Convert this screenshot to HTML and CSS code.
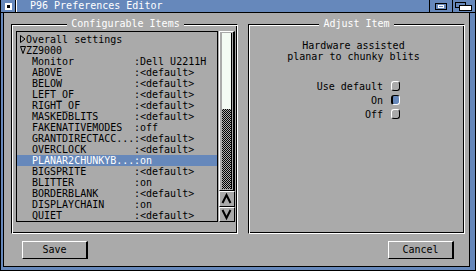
FILE: index.html
```html
<!DOCTYPE html>
<html lang="en">
<head>
    <meta charset="UTF-8">
    <meta name="viewport" content="width=device-width, initial-scale=1.0">
    <title>P96 Preferences Editor</title>
    <link rel="stylesheet" href="styles.css">
</head>
<body>
    <div class="window">
        <div class="titlebar">
            <div class="close-gadget"><span class="close-box"></span></div>
            <div class="drag-bar">P96 Preferences Editor</div>
            <div class="gadget zoom-gadget">
                <svg width="12" height="7" viewBox="0 0 12 7">
                    <rect x="0.5" y="0.5" width="11" height="6" fill="none" stroke="#000"/>
                    <rect x="3.5" y="2.5" width="5" height="2" fill="none" stroke="#fff"/>
                </svg>
            </div>
            <div class="gadget depth-gadget">
                <svg width="18" height="9" viewBox="0 0 18 9">
                    <rect x="0.5" y="0.5" width="10" height="5" fill="none" stroke="#000"/>
                    <rect x="4.5" y="3.5" width="12" height="5" fill="#fff" stroke="#000"/>
                </svg>
            </div>
        </div>

        <div class="frame">
            <div class="panel">
                <div class="groups">
                    <div class="group group-left">
                        <div class="group-title">Configurable Items</div>
                        <div class="list-area">
                            <div class="list">
                                <div class="row node">
                                    <svg class="tree-icon" width="6" height="11" viewBox="0 0 6 11">
                                        <polygon points="0.5,1.5 5,5 0.5,8.5" fill="none" stroke="#000"/>
                                    </svg>Overall settings
                                </div>
                                <div class="row node">
                                    <svg class="tree-icon" width="6" height="11" viewBox="0 0 6 11">
                                        <polygon points="0.5,1.5 5.5,1.5 3,8.5" fill="none" stroke="#000"/>
                                    </svg>ZZ9000
                                </div>
                                <div class="row"><span class="name">Monitor</span><span>:Dell U2211H</span></div>
                                <div class="row"><span class="name">ABOVE</span><span>:&lt;default&gt;</span></div>
                                <div class="row"><span class="name">BELOW</span><span>:&lt;default&gt;</span></div>
                                <div class="row"><span class="name">LEFT_OF</span><span>:&lt;default&gt;</span></div>
                                <div class="row"><span class="name">RIGHT_OF</span><span>:&lt;default&gt;</span></div>
                                <div class="row"><span class="name">MASKEDBLITS</span><span>:&lt;default&gt;</span></div>
                                <div class="row"><span class="name">FAKENATIVEMODES</span><span>:off</span></div>
                                <div class="row"><span class="name">GRANTDIRECTACC...</span><span>:&lt;default&gt;</span></div>
                                <div class="row"><span class="name">OVERCLOCK</span><span>:&lt;default&gt;</span></div>
                                <div class="row selected"><span class="name">PLANAR2CHUNKYB...</span><span>:on</span></div>
                                <div class="row"><span class="name">BIGSPRITE</span><span>:&lt;default&gt;</span></div>
                                <div class="row"><span class="name">BLITTER</span><span>:on</span></div>
                                <div class="row"><span class="name">BORDERBLANK</span><span>:&lt;default&gt;</span></div>
                                <div class="row"><span class="name">DISPLAYCHAIN</span><span>:on</span></div>
                                <div class="row"><span class="name">QUIET</span><span>:&lt;default&gt;</span></div>
                            </div>
                            <div class="scroller">
                                <div class="prop">
                                    <div class="track"><div class="knob"></div></div>
                                </div>
                                <div class="arrow">
                                    <svg width="14" height="14" viewBox="0 0 14 14">
                                        <polyline points="2.5,11 6.5,3 10.5,11" fill="none" stroke="#000" stroke-width="2"/>
                                    </svg>
                                </div>
                                <div class="arrow">
                                    <svg width="14" height="13" viewBox="0 0 14 13">
                                        <polyline points="2.5,2 6.5,10 10.5,2" fill="none" stroke="#000" stroke-width="2"/>
                                    </svg>
                                </div>
                            </div>
                        </div>
                    </div>

                    <div class="group group-right">
                        <div class="group-title">Adjust Item</div>
                        <div class="item-desc">Hardware assisted<br>planar to chunky blits</div>
                        <div class="options">
                            <div class="option"><span>Use default</span><span class="radio"></span></div>
                            <div class="option"><span>On</span><span class="radio on"></span></div>
                            <div class="option"><span>Off</span><span class="radio"></span></div>
                        </div>
                    </div>
                </div>

                <div class="buttons">
                    <button>Save</button>
                    <button>Cancel</button>
                </div>
            </div>
        </div>
    </div>
</body>
</html>
```

FILE: styles.css
```css
html, body {
    margin: 0;
    padding: 0;
    overflow: hidden;
}
body {
    font-family: "DejaVu Sans Mono", "Liberation Mono", monospace;
    font-size: 10px;
    color: #000;
    background-color: #aaa;
}
.window {
    width: 476px;
    height: 271px;
    box-sizing: border-box;
    border: 1px solid #000;
    border-top: 0;
    display: flex;
    flex-direction: column;
    background-color: #aaa;
}

/* title bar */
.titlebar {
    height: 12px;
    display: flex;
    background-color: #6688bb;
    border-bottom: 1px solid #000;
}
.close-gadget {
    width: 14px;
    border-right: 1px solid #000;
    display: flex;
    align-items: center;
    justify-content: center;
}
.close-box {
    width: 3px;
    height: 3px;
    border: 2px solid #fff;
    background-color: #000;
}
.drag-bar {
    flex: 1;
    border-left: 1px solid #fff;
    border-right: 1px solid #000;
    padding-left: 13px;
    color: #fff;
    line-height: 12px;
    white-space: nowrap;
}
.gadget {
    display: flex;
    align-items: center;
    justify-content: center;
}
.zoom-gadget {
    width: 22px;
    border-right: 1px solid #000;
}
.depth-gadget {
    width: 22px;
}

/* window frame */
.frame {
    flex: 1;
    display: flex;
    border-style: solid;
    border-color: #6688bb;
    border-width: 0 5px 3px 2px;
}
.panel {
    flex: 1;
    border: 1px solid #000;
    border-top: 0;
    padding: 11px 4px 0 7px;
}
.groups {
    display: flex;
    gap: 10px;
    height: 210px;
}
.group {
    box-sizing: border-box;
    border: 1px solid;
    border-color: #000 #fff #fff #000;
    box-shadow: inset 1px 1px 0 #fff, inset -1px -1px 0 #000;
}
.group-left {
    width: 227px;
    padding: 0 2px 0 4px;
}
.group-right {
    flex: 1;
}
.group-title {
    width: fit-content;
    margin: -6px auto 0;
    padding: 0 4px;
    line-height: 10px;
    color: #fff;
    background-color: #aaa;
}

/* list */
.list-area {
    display: flex;
    gap: 1px;
    height: 191px;
    margin-top: 2px;
}
.list {
    width: 202px;
    box-sizing: border-box;
    border: 1px solid #000;
    padding-top: 2px;
    overflow: hidden;
}
.row {
    display: flex;
    height: 11px;
    line-height: 11px;
    padding-left: 15px;
    white-space: pre;
}
.row.node {
    padding-left: 3px;
    white-space: nowrap;
}
.row.selected {
    background-color: #6688bb;
    color: #fff;
}
.tree-icon {
    flex-shrink: 0;
}
.name {
    width: 102px;
    flex-shrink: 0;
}

/* scroller */
.scroller {
    width: 16px;
    display: flex;
    flex-direction: column;
}
.prop {
    flex: 1;
    border-style: solid;
    border-color: #fff #000 #000 #fff;
    border-width: 1px 2px 1px 1px;
    padding: 1px 1px 1px 2px;
}
.track {
    height: 100%;
    box-sizing: border-box;
    border-right: 1px solid #000;
    background-color: #aaa;
    background-image: repeating-conic-gradient(#000 0 25%, transparent 0 50%);
    background-size: 2px 2px;
}
.knob {
    height: 76px;
    background-color: #f4fbf4;
}
.arrow {
    height: 16px;
    box-sizing: border-box;
    border: 1px solid;
    border-color: #fff #000 #000 #fff;
    display: flex;
    align-items: center;
    justify-content: center;
}
.arrow:last-child {
    height: 15px;
}

/* adjust item */
.item-desc {
    margin-top: 11px;
    padding-right: 6px;
    text-align: center;
    line-height: 11px;
}
.options {
    width: 151px;
    margin-top: 17px;
}
.option {
    height: 14px;
    display: flex;
    align-items: center;
    justify-content: flex-end;
    gap: 8px;
}
.radio {
    width: 9px;
    height: 10px;
    box-sizing: border-box;
    border: 1px solid;
    border-color: #fff #000 #000 #fff;
    border-radius: 3px;
}
.radio.on {
    border-color: #000 #fff #fff #000;
    border-left-width: 2px;
    background-color: #6688bb;
}

/* buttons */
.buttons {
    display: flex;
    justify-content: space-between;
    margin-top: 7px;
    padding: 0 11px;
}
button {
    width: 66px;
    height: 18px;
    padding: 0;
    font: inherit;
    line-height: 16px;
    color: #000;
    background-color: #aaa;
    border: 1px solid;
    border-color: #fff #000 #000 #fff;
    border-right-width: 2px;
    border-radius: 0;
}
```
